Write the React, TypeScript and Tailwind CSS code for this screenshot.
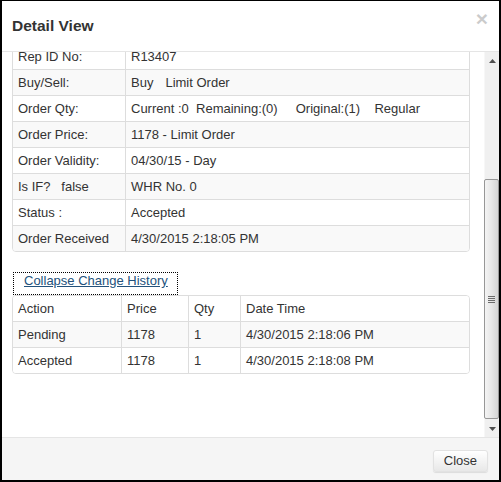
import React from "react";

const details: { label: React.ReactNode; value: React.ReactNode }[] = [
  { label: "Rep ID No:", value: "R13407" },
  { label: "Buy/Sell:", value: <>Buy<span className="ml-[12px]">Limit Order</span></> },
  {
    label: "Order Qty:",
    value: (
      <span className="whitespace-pre">
        {"Current :0  Remaining:(0)     Original:(1)    Regular"}
      </span>
    ),
  },
  { label: "Order Price:", value: "1178 - Limit Order" },
  { label: "Order Validity:", value: "04/30/15 - Day" },
  { label: <span className="whitespace-pre">{"Is IF?   false"}</span>, value: "WHR No. 0" },
  { label: "Status :", value: "Accepted" },
  { label: "Order Received", value: "4/30/2015 2:18:05 PM" },
];

const history = [
  ["Action", "Price", "Qty", "Date Time"],
  ["Pending", "1178", "1", "4/30/2015 2:18:06 PM"],
  ["Accepted", "1178", "1", "4/30/2015 2:18:08 PM"],
];

function Scrollbar() {
  return (
    <div className="w-[15px] flex flex-col bg-[#f0f0f0] border-l border-[#f7f7f7]">
      {/* up arrow */}
      <div className="h-[17px] flex items-center justify-center">
        <svg width="7" height="4" viewBox="0 0 7 4">
          <path d="M3.5 0L7 4H0z" fill="#4f4f4f" />
        </svg>
      </div>
      {/* track + thumb */}
      <div className="flex-1 flex flex-col">
        <div className="mt-[110px] h-[240px] -ml-px rounded-[2px] border border-[#979797] bg-gradient-to-r from-[#f4f4f4] via-[#e6e6e6] to-[#d4d4d4] flex items-center justify-center">
          <div className="flex flex-col gap-px">
            <div className="w-[7px] h-px bg-[#6b6b6b]" />
            <div className="w-[7px] h-px bg-[#6b6b6b]" />
            <div className="w-[7px] h-px bg-[#6b6b6b]" />
            <div className="w-[7px] h-px bg-[#6b6b6b]" />
          </div>
        </div>
      </div>
      {/* down arrow */}
      <div className="h-[17px] flex items-center justify-center">
        <svg width="7" height="4" viewBox="0 0 7 4">
          <path d="M0 0H7L3.5 4z" fill="#4f4f4f" />
        </svg>
      </div>
    </div>
  );
}

export default function App() {
  return (
    <div className="w-[501px] h-[482px] bg-white font-['Liberation_Sans',Arial,sans-serif] text-[13px] text-[#333]">
      <div className="flex flex-col h-full border-t border-x-2 border-b-2 border-black">
        {/* Header */}
        <div className="h-[51px] shrink-0 flex justify-between border-b border-[#e5e5e5] pl-[10px] pr-[11px]">
          <h4 className="self-center text-[15.5px] font-bold">Detail View</h4>
          <button className="self-start mt-[7px] text-[21px] leading-[21px] font-bold text-black opacity-20">
            ×
          </button>
        </div>

        {/* Body */}
        <div className="flex-1 min-h-0 flex">
          <div className="flex-1 overflow-hidden pl-[10px] pr-[14px]">
            {/* Details table */}
            <div className="-mt-[9px] border border-[#ddd] rounded-[4px] overflow-hidden">
              {details.map((row, i) => (
                <div
                  key={i}
                  className={`grid grid-cols-[112px_1fr] ${i > 0 ? "border-t border-[#ddd]" : ""} ${
                    i % 2 === 1 ? "bg-[#f9f9f9]" : "bg-white"
                  }`}
                >
                  <div className="px-[5px] py-[4px] leading-[17px]">{row.label}</div>
                  <div className="px-[5px] py-[4px] leading-[17px] border-l border-[#ddd]">{row.value}</div>
                </div>
              ))}
            </div>

            {/* Toggle */}
            <button className="mt-[20px] ml-px block border border-dotted border-black pl-[10px] pr-[9px] pt-0 pb-[5px] leading-[16px] text-[#23527c] underline">
              Collapse Change History
            </button>

            {/* History table */}
            <div className="border border-[#ddd] rounded-[4px] overflow-hidden">
              {history.map((row, i) => (
                <div
                  key={i}
                  className={`grid grid-cols-[108px_67px_52px_1fr] ${i > 0 ? "border-t border-[#ddd]" : ""} ${
                    i === 1 ? "bg-[#f9f9f9]" : "bg-white"
                  }`}
                >
                  {row.map((cell, j) => (
                    <div
                      key={j}
                      className={`px-[5px] py-[4px] leading-[17px] ${j > 0 ? "border-l border-[#ddd]" : ""}`}
                    >
                      {cell}
                    </div>
                  ))}
                </div>
              ))}
            </div>
          </div>
          <Scrollbar />
        </div>

        {/* Footer */}
        <div className="h-[43px] shrink-0 flex justify-end items-start border-t border-[#e5e5e5] bg-[#f5f5f5] pt-[12px] pr-[11px]">
          <button className="h-[22px] px-[10px] rounded-[3px] border border-[#e2e2e2] bg-gradient-to-b from-white to-[#e8e8e8] shadow-[0_1px_1px_rgba(0,0,0,0.1)] text-[13px] leading-[20px] text-[#333]">
            Close
          </button>
        </div>
      </div>
    </div>
  );
}
